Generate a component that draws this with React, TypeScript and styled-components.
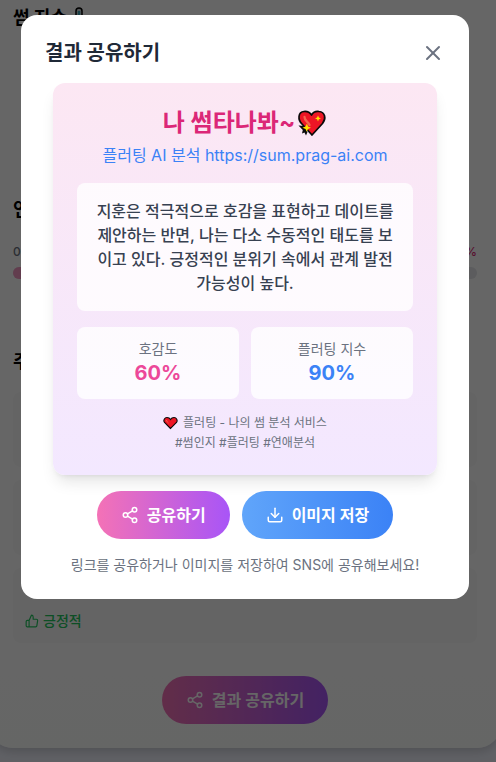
import React from 'react';
import styled, { createGlobalStyle } from 'styled-components';
import { FiDownload, FiShare2, FiThumbsUp, FiX } from 'react-icons/fi';

const GlobalStyle = createGlobalStyle`
  * { box-sizing: border-box; }
  html, body { margin: 0; height: 100%; overflow: hidden; }
  body { font-family: Inter, "Noto Sans CJK KR", sans-serif; color: #000; background: #eff1ff; }
  h1, h2, h3, p { margin: 0; }
  button { font: inherit; border: 0; padding: 0; background: none; cursor: pointer; }
`;

const Page = styled.div`
  height: 762px;
  overflow: hidden;
  background: #eff1fb;
`;

const Report = styled.main`
  width: 512px;
  height: 748px;
  margin-left: -11px;
  padding: 0 24px;
  display: flex;
  flex-direction: column;
  background: linear-gradient(#fff 80%, #fdfffd);
  border-radius: 0 0 24px 24px;
  box-shadow: 0 4px 8px rgba(0, 0, 0, 0.15);
`;

const SectionTitle = styled.h2<{ $space: number }>`
  display: flex;
  align-items: center;
  gap: 7px;
  height: 28px;
  margin-top: ${(p) => p.$space}px;
  font-size: 18px;
  line-height: 28px;
  font-weight: 700;
`;

const MeterLabels = styled.div`
  display: flex;
  justify-content: space-between;
  margin-top: 18px;
  height: 20px;
  font-size: 12px;
  line-height: 20px;
  font-weight: 500;
  color: #6b7280;
`;

const Percent = styled.span`
  color: #db2777;
`;

const Meter = styled.div`
  height: 12px;
  margin-top: 5px;
  border-radius: 6px;
  background: #e5e7eb;
`;

const MeterFill = styled.div`
  width: 60%;
  height: 12px;
  border-radius: 6px;
  background: #f69ac4;
`;

const Messages = styled.div`
  display: flex;
  flex-direction: column;
  gap: 13px;
  margin-top: 16px;
`;

const Message = styled.div`
  height: 75px;
  display: flex;
  align-items: flex-end;
  padding: 12px;
  border-radius: 8px;
  background: #fafafa;
`;

const Mood = styled.span`
  display: flex;
  align-items: center;
  gap: 4px;
  font-size: 14px;
  font-weight: 500;
  line-height: 20px;
  color: #22c55e;
`;

const Pill = styled.button<{ $from: string; $to: string }>`
  height: 48px;
  padding: 0 24px;
  display: flex;
  align-items: center;
  gap: 8px;
  border-radius: 24px;
  font-size: 16px;
  font-weight: 600;
  line-height: 24px;
  white-space: nowrap;
  color: #fff;
  background: linear-gradient(to right, ${(p) => p.$from}, ${(p) => p.$to});
`;

const ReportAction = styled.div`
  display: flex;
  justify-content: center;
  margin-top: 33px;
`;

const Overlay = styled.div`
  position: fixed;
  inset: 0;
  padding: 15px 27px 0 21px;
  background: rgba(0, 0, 0, 0.6);
`;

const Dialog = styled.section`
  height: 584px;
  padding: 24px;
  border-radius: 16px;
  background: #fff;
`;

const DialogHeader = styled.header`
  display: flex;
  align-items: center;
  justify-content: space-between;
  height: 28px;
`;

const DialogTitle = styled.h2`
  padding-top: 1px;
  font-size: 20px;
  line-height: 29px;
  font-weight: 700;
  color: #1f2937;
`;

const CloseButton = styled.button`
  display: flex;
  color: #6b7280;
`;

const ResultCard = styled.article`
  height: 392px;
  margin: 16px 8px 0;
  padding: 24px;
  border-radius: 12px;
  text-align: center;
  background: linear-gradient(#fce7f3, #f3e8ff);
  box-shadow: 0 10px 15px -3px rgba(0, 0, 0, 0.1), 0 4px 6px -4px rgba(0, 0, 0, 0.1);
`;

const Brand = styled.h3`
  display: flex;
  justify-content: center;
  align-items: center;
  gap: 1px;
  height: 32px;
  font-size: 24px;
  line-height: 32px;
  font-weight: 700;
  color: #db2777;
`;

const SiteLine = styled.p`
  margin-top: 4px;
  font-size: 16px;
  line-height: 24px;
  color: #3b82f6;
`;

const Summary = styled.p`
  margin-top: 16px;
  padding: 16px;
  border-radius: 8px;
  background: rgba(255, 255, 255, 0.8);
  font-size: 16px;
  line-height: 24px;
  font-weight: 500;
  color: #374151;
`;

const Stats = styled.div`
  display: grid;
  grid-template-columns: 1fr 1fr;
  gap: 12px;
  margin-top: 16px;
`;

const Stat = styled.div`
  height: 72px;
  padding: 12px;
  border-radius: 8px;
  background: rgba(255, 255, 255, 0.8);
`;

const StatLabel = styled.p`
  font-size: 14px;
  line-height: 20px;
  color: #6b7280;
`;

const StatValue = styled.p<{ $color: string }>`
  font-size: 20px;
  line-height: 29px;
  font-weight: 700;
  color: ${(p) => p.$color};
`;

const Footnote = styled.div`
  margin-top: 14px;
  font-size: 12px;
  line-height: 20px;
  color: #6b7280;
`;

const FootnoteRow = styled.p`
  display: flex;
  align-items: center;
  justify-content: center;
  gap: 5px;
  height: 20px;
`;

const Actions = styled.div`
  display: flex;
  justify-content: center;
  gap: 12px;
  margin-top: 16px;
`;

const Hint = styled.p`
  margin-top: 16px;
  text-align: center;
  font-size: 14px;
  line-height: 20px;
  color: #6b7280;
`;

const SparkHeart = () => (
  <svg width="31" height="28" viewBox="0 0 31 28">
    <path d="M16 26 6 15C1.500 10.500 2 3 8 2.500c3-.3 6 1.200 7.500 3.500C17 3.500 20 2 23 2.500c6 .5 7.500 7 3.500 12Z" fill="#ed1625" stroke="#0a0a0a" strokeWidth="1.700" strokeLinejoin="round" />
    <path d="M8.500 8c0 4 4 4.500 5 8" fill="none" stroke="#f3654f" strokeWidth="2.300" strokeLinecap="round" />
    <path d="m22 6.500.9 2.100 2.100.9-2.100.8-.9 2.200-.9-2.200-2.100-.8 2.100-.9Z" fill="#ffe100" />
    <path d="m2.500 16.500 6 .5 3 6-1.500 3.500-1.500-3-2.500 1 .8-3.500Z" fill="#0a0a0a" />
    <path d="m11 14.500 1 3 3 1.200-3 1.200-1.200 2.800-1.300-2.700-3-1.300 3-1.200Z" fill="#ffe100" />
  </svg>
);

const Heart = () => (
  <svg width="15" height="14" viewBox="0 0 15 14">
    <path d="M7.500 12.500 1.500 6.500c-1.500-2 0-5 2.500-5 1.500 0 2.800.8 3.500 2 .7-1.200 2-2 3.500-2 2.500 0 4 3 2.500 5Z" fill="#ed1625" stroke="#0a0a0a" strokeWidth="1.100" />
    <path d="M3.500 4c.2 1.700 1.200 2.300 2 3" fill="none" stroke="#f3654f" strokeWidth="1" />
  </svg>
);

const Thermometer = () => (
  <svg width="10" height="22" viewBox="0 0 10 22">
    <path d="M2 14V4a3 3 0 0 1 6 0v10a4 4 0 1 1-6 0Z" fill="#cdd3d6" stroke="#000" strokeWidth="1.500" />
    <path d="M5 4v12" stroke="#3ba0b5" strokeWidth="2.500" />
  </svg>
);

export default function App() {
  return (
    <>
      <GlobalStyle />
      <Page>
        <Report>
          <SectionTitle $space={4}>썸 지수 <Thermometer /></SectionTitle>
          <SectionTitle $space={164}>연</SectionTitle>
          <MeterLabels>
            <span>0%</span>
            <Percent>%</Percent>
          </MeterLabels>
          <Meter><MeterFill /></Meter>
          <SectionTitle $space={69}>주</SectionTitle>
          <Messages>
            <Message />
            <Message />
            <Message>
              <Mood><FiThumbsUp size={14} />긍정적</Mood>
            </Message>
          </Messages>
          <ReportAction>
            <Pill $from="#f472b6" $to="#a855f7"><FiShare2 size={18} />결과 공유하기</Pill>
          </ReportAction>
        </Report>
      </Page>
      <Overlay>
        <Dialog role="dialog">
          <DialogHeader>
            <DialogTitle>결과 공유하기</DialogTitle>
            <CloseButton aria-label="닫기"><FiX size={24} /></CloseButton>
          </DialogHeader>
          <ResultCard>
            <Brand>나 썸타나봐~<SparkHeart /></Brand>
            <SiteLine>플러팅 AI 분석 https://sum.prag-ai.com</SiteLine>
            <Summary>
              지훈은 적극적으로 호감을 표현하고 데이트를 제안하는 반면, 나는 다소 수동적인 태도를 보이고 있다. 긍정적인 분위기 속에서 관계 발전 가능성이 높다.
            </Summary>
            <Stats>
              <Stat>
                <StatLabel>호감도</StatLabel>
                <StatValue $color="#ec4899">60%</StatValue>
              </Stat>
              <Stat>
                <StatLabel>플러팅 지수</StatLabel>
                <StatValue $color="#3b82f6">90%</StatValue>
              </Stat>
            </Stats>
            <Footnote>
              <FootnoteRow><Heart />플러팅 - 나의 썸 분석 서비스</FootnoteRow>
              <FootnoteRow>#썸인지 #플러팅 #연애분석</FootnoteRow>
            </Footnote>
          </ResultCard>
          <Actions>
            <Pill $from="#f472b6" $to="#a855f7"><FiShare2 size={18} />공유하기</Pill>
            <Pill $from="#60a5fa" $to="#3b82f6"><FiDownload size={18} />이미지 저장</Pill>
          </Actions>
          <Hint>링크를 공유하거나 이미지를 저장하여 SNS에 공유해보세요!</Hint>
        </Dialog>
      </Overlay>
    </>
  );
}
